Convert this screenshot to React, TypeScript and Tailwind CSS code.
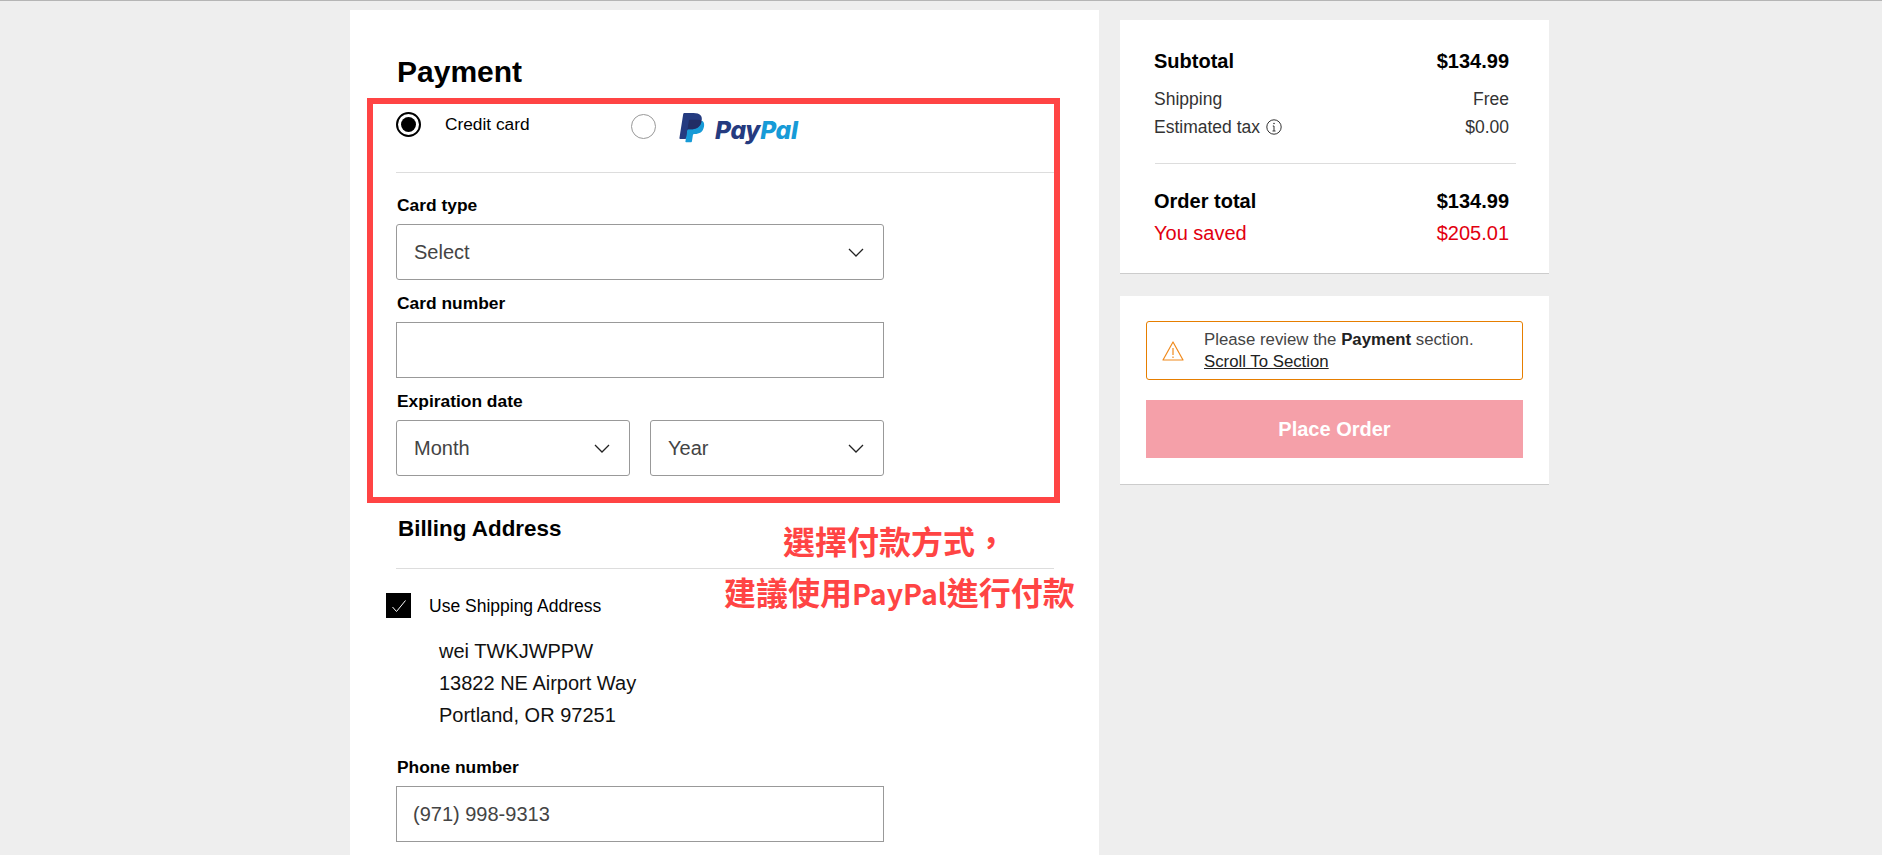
function Chevron() {
  return (
    <svg width="16" height="9" viewBox="0 0 16 9" fill="none" stroke="#222" strokeWidth="1.3">
      <path d="M1 1l7 7 7-7" />
    </svg>
  );
}

function Field({ label, children }: { label: string; children: React.ReactNode }) {
  return (
    <div>
      <div className="mb-[9px] pl-px text-[17.4px] leading-[20px] font-bold text-black">{label}</div>
      {children}
    </div>
  );
}

function SelectBox({ value, className }: { value: string; className: string }) {
  return (
    <div className={`flex h-[56px] items-center justify-between rounded-[3px] border border-[#999] bg-white pr-[19px] pl-[17px] text-[20px] text-[#444] ${className}`}>
      <span>{value}</span>
      <Chevron />
    </div>
  );
}

function TextBox({ value }: { value?: string }) {
  return (
    <div className="flex h-[56px] w-[488px] items-center border border-[#999] bg-white pl-[16px] text-[20px] text-[#444]">
      {value}
    </div>
  );
}

function PayPalLogo() {
  return (
    <div className="ml-[23px] flex items-start">
      <svg width="26" height="30" viewBox="0 0 26 31" className="mt-px">
        <path fill="#253B80" d="M7.266 29.154l.523-3.322-1.165-.027H1.061L4.927 1.292a.316.316 0 0 1 .314-.268h9.38c3.114 0 5.263.648 6.385 1.927.526.6.861 1.227 1.023 1.917.17.724.173 1.589.007 2.644l-.012.077v.676l.526.298a3.69 3.69 0 0 1 1.065.812c.45.513.741 1.165.864 1.938.127.795.085 1.741-.123 2.812-.24 1.232-.628 2.305-1.152 3.183a6.547 6.547 0 0 1-1.825 2c-.696.494-1.523.869-2.458 1.109-.906.236-1.939.355-3.072.355h-.73c-.522 0-1.029.188-1.427.525a2.21 2.21 0 0 0-.744 1.328l-.055.299-.924 5.855-.042.215c-.011.068-.03.102-.058.125a.155.155 0 0 1-.096.035H7.266z" />
        <path fill="#179BD7" d="M23.048 7.667c-.028.179-.06.362-.096.55-1.237 6.351-5.469 8.545-10.874 8.545H9.326c-.661 0-1.218.48-1.321 1.132L6.596 26.83l-.399 2.533a.704.704 0 0 0 .695.814h4.881c.578 0 1.069-.42 1.16-.99l.048-.248.919-5.832.059-.32c.09-.572.582-.992 1.16-.992h.73c4.729 0 8.431-1.92 9.513-7.476.452-2.321.218-4.259-.978-5.622a4.667 4.667 0 0 0-1.336-1.03z" />
        <path fill="#222D65" d="M21.754 7.151a9.757 9.757 0 0 0-1.203-.267 15.284 15.284 0 0 0-2.426-.177h-7.352a1.172 1.172 0 0 0-1.159.992L8.05 17.605l-.045.289a1.336 1.336 0 0 1 1.321-1.132h2.752c5.405 0 9.637-2.195 10.874-8.545.037-.188.068-.371.096-.55a6.594 6.594 0 0 0-1.017-.429 9.045 9.045 0 0 0-.277-.087z" />
        <path fill="#253B80" d="M9.614 7.699a1.169 1.169 0 0 1 1.159-.991h7.352c.871 0 1.684.057 2.426.177a9.757 9.757 0 0 1 1.481.353c.365.121.704.264 1.017.429.368-2.347-.003-3.945-1.272-5.392C20.378.682 17.853 0 14.622 0h-9.38c-.66 0-1.223.48-1.325 1.133L.01 25.898a.806.806 0 0 0 .795.932h5.791l1.454-9.225 1.564-9.906z" />
      </svg>
      <span className="mt-[3px] ml-[10px] font-['Inter',sans-serif] text-[24.5px] leading-[30px] font-extrabold tracking-[-0.3px] italic">
        <span className="text-[#253b80]">Pay</span>
        <span className="text-[#179bd7]">Pal</span>
      </span>
    </div>
  );
}

function SummaryRow({ left, right, className }: { left: React.ReactNode; right: string; className: string }) {
  return (
    <div className={`flex items-center justify-between pr-[7px] ${className}`}>
      <div className="flex items-center">{left}</div>
      <span>{right}</span>
    </div>
  );
}

export default function App() {
  return (
    <div className="relative h-[855px] overflow-hidden border-t border-[#b5b5b5] bg-[#eeeeee] font-['Liberation_Sans',Arial,sans-serif]">
      <div className="flex items-start pl-[350px]">
        {/* left column */}
        <div className="mt-[9px] h-[900px] w-[749px] bg-white pt-[44px] pl-[46px]">
          <h1 className="pl-px text-[30px] leading-[36px] font-bold text-black">Payment</h1>

          <div className="mt-[22px] flex h-[61px] w-[658px] items-start border-b border-[#ddd]">
            <div className="flex h-[25px] w-[25px] items-center justify-center rounded-full border-2 border-black">
              <div className="h-[15px] w-[15px] rounded-full bg-black" />
            </div>
            <span className="ml-[24px] w-[186px] text-[17.3px] leading-[24px] text-black">Credit card</span>
            <div className="mt-[2px] h-[25px] w-[25px] rounded-full border border-[#999]" />
            <PayPalLogo />
          </div>

          <div className="mt-[22px] flex flex-col gap-[13px]">
            <Field label="Card type">
              <SelectBox value="Select" className="w-[488px]" />
            </Field>
            <Field label="Card number">
              <TextBox />
            </Field>
            <Field label="Expiration date">
              <div className="flex w-[488px] gap-[20px]">
                <SelectBox value="Month" className="w-[234px]" />
                <SelectBox value="Year" className="w-[234px]" />
              </div>
            </Field>
          </div>

          <h2 className="mt-[39px] w-[658px] border-b border-[#ddd] pb-[25px] pl-[2px] text-[22.4px] leading-[28px] font-bold text-black">
            Billing Address
          </h2>

          <div className="mt-[24px] -ml-[10px] flex items-center">
            <div className="flex h-[25px] w-[25px] items-center justify-center bg-black">
              <svg width="16" height="14" viewBox="0 0 16 14" fill="none" stroke="#fff" strokeWidth="1">
                <path d="M1.5 8l4 4.5 9-11" />
              </svg>
            </div>
            <span className="ml-[18px] text-[17.5px] leading-[24px] text-black">Use Shipping Address</span>
          </div>

          <div className="mt-[17px] pl-[43px] text-[20px] leading-[32px] text-[#111]">
            <div>wei TWKJWPPW</div>
            <div>13822 NE Airport Way</div>
            <div>Portland, OR 97251</div>
          </div>

          <div className="mt-[26px]">
            <Field label="Phone number">
              <TextBox value="(971) 998-9313" />
            </Field>
          </div>
        </div>

        {/* right column */}
        <div className="ml-[21px] flex w-[429px] flex-col gap-[22px] pt-[19px]">
          <div className="h-[254px] border-b border-[#ccc] bg-white pt-[28px] pr-[33px] pl-[34px]">
            <SummaryRow left="Subtotal" right="$134.99" className="h-[26px] text-[20px] font-bold text-black" />
            <SummaryRow left="Shipping" right="Free" className="mt-[13px] h-[24px] text-[17.5px] text-[#333]" />
            <SummaryRow
              left={
                <>
                  Estimated tax
                  <svg width="16" height="16" viewBox="0 0 16 16" fill="none" stroke="#333" className="ml-[6px]">
                    <circle cx="8" cy="8" r="7.2" strokeWidth="1" />
                    <path d="M8 7v5M6.5 12h3M6.8 7H8" strokeWidth="1" />
                    <circle cx="8" cy="4.5" r="0.8" fill="#333" stroke="none" />
                  </svg>
                </>
              }
              right="$0.00"
              className="mt-[4px] h-[24px] text-[17.5px] text-[#333]"
            />
            <div className="mt-[24px] ml-px h-px bg-[#ddd]" />
            <SummaryRow left="Order total" right="$134.99" className="mt-[24px] h-[26px] text-[20px] font-bold text-black" />
            <SummaryRow left="You saved" right="$205.01" className="mt-[6px] h-[26px] text-[20px] text-[#e2000f]" />
          </div>

          <div className="h-[189px] border-b border-[#ccc] bg-white px-[26px] pt-[25px]">
            <div className="flex h-[59px] w-[377px] items-center rounded-[3px] border border-[#e67e00] pl-[15px]">
              <svg width="22" height="20" viewBox="0 0 22 20" fill="none" stroke="#f08a1d" strokeWidth="1.2" strokeLinejoin="round" className="mr-[20px] shrink-0">
                <path d="M11 1L1 19h20z" />
                <path d="M11 7v7M11 15.5v1.5" />
              </svg>
              <div className="text-[16.8px] leading-[22px] text-[#444]">
                <div>
                  Please review the <b className="text-[#222]">Payment</b> section.
                </div>
                <a className="text-[#222] underline">Scroll To Section</a>
              </div>
            </div>
            <button className="mt-[20px] flex h-[58px] w-[377px] items-center justify-center bg-[#f5a0a9] text-[20px] font-bold text-white">
              Place Order
            </button>
          </div>
        </div>
      </div>

      {/* red highlight drawn over the form */}
      <div className="pointer-events-none absolute top-[97px] left-[367px] h-[405px] w-[693px] border-[6px] border-[#ff4444]" />
      <div className="absolute top-[514px] left-[724px] font-['Noto_Sans_CJK_TC',sans-serif] text-[32px] leading-[51px] font-bold text-[#ff4444]">
        <div className="pl-[59px]">選擇付款方式，</div>
        <div className="whitespace-nowrap">
          建議使用<span className="text-[28.5px]">PayPal</span>進行付款
        </div>
      </div>
    </div>
  );
}
